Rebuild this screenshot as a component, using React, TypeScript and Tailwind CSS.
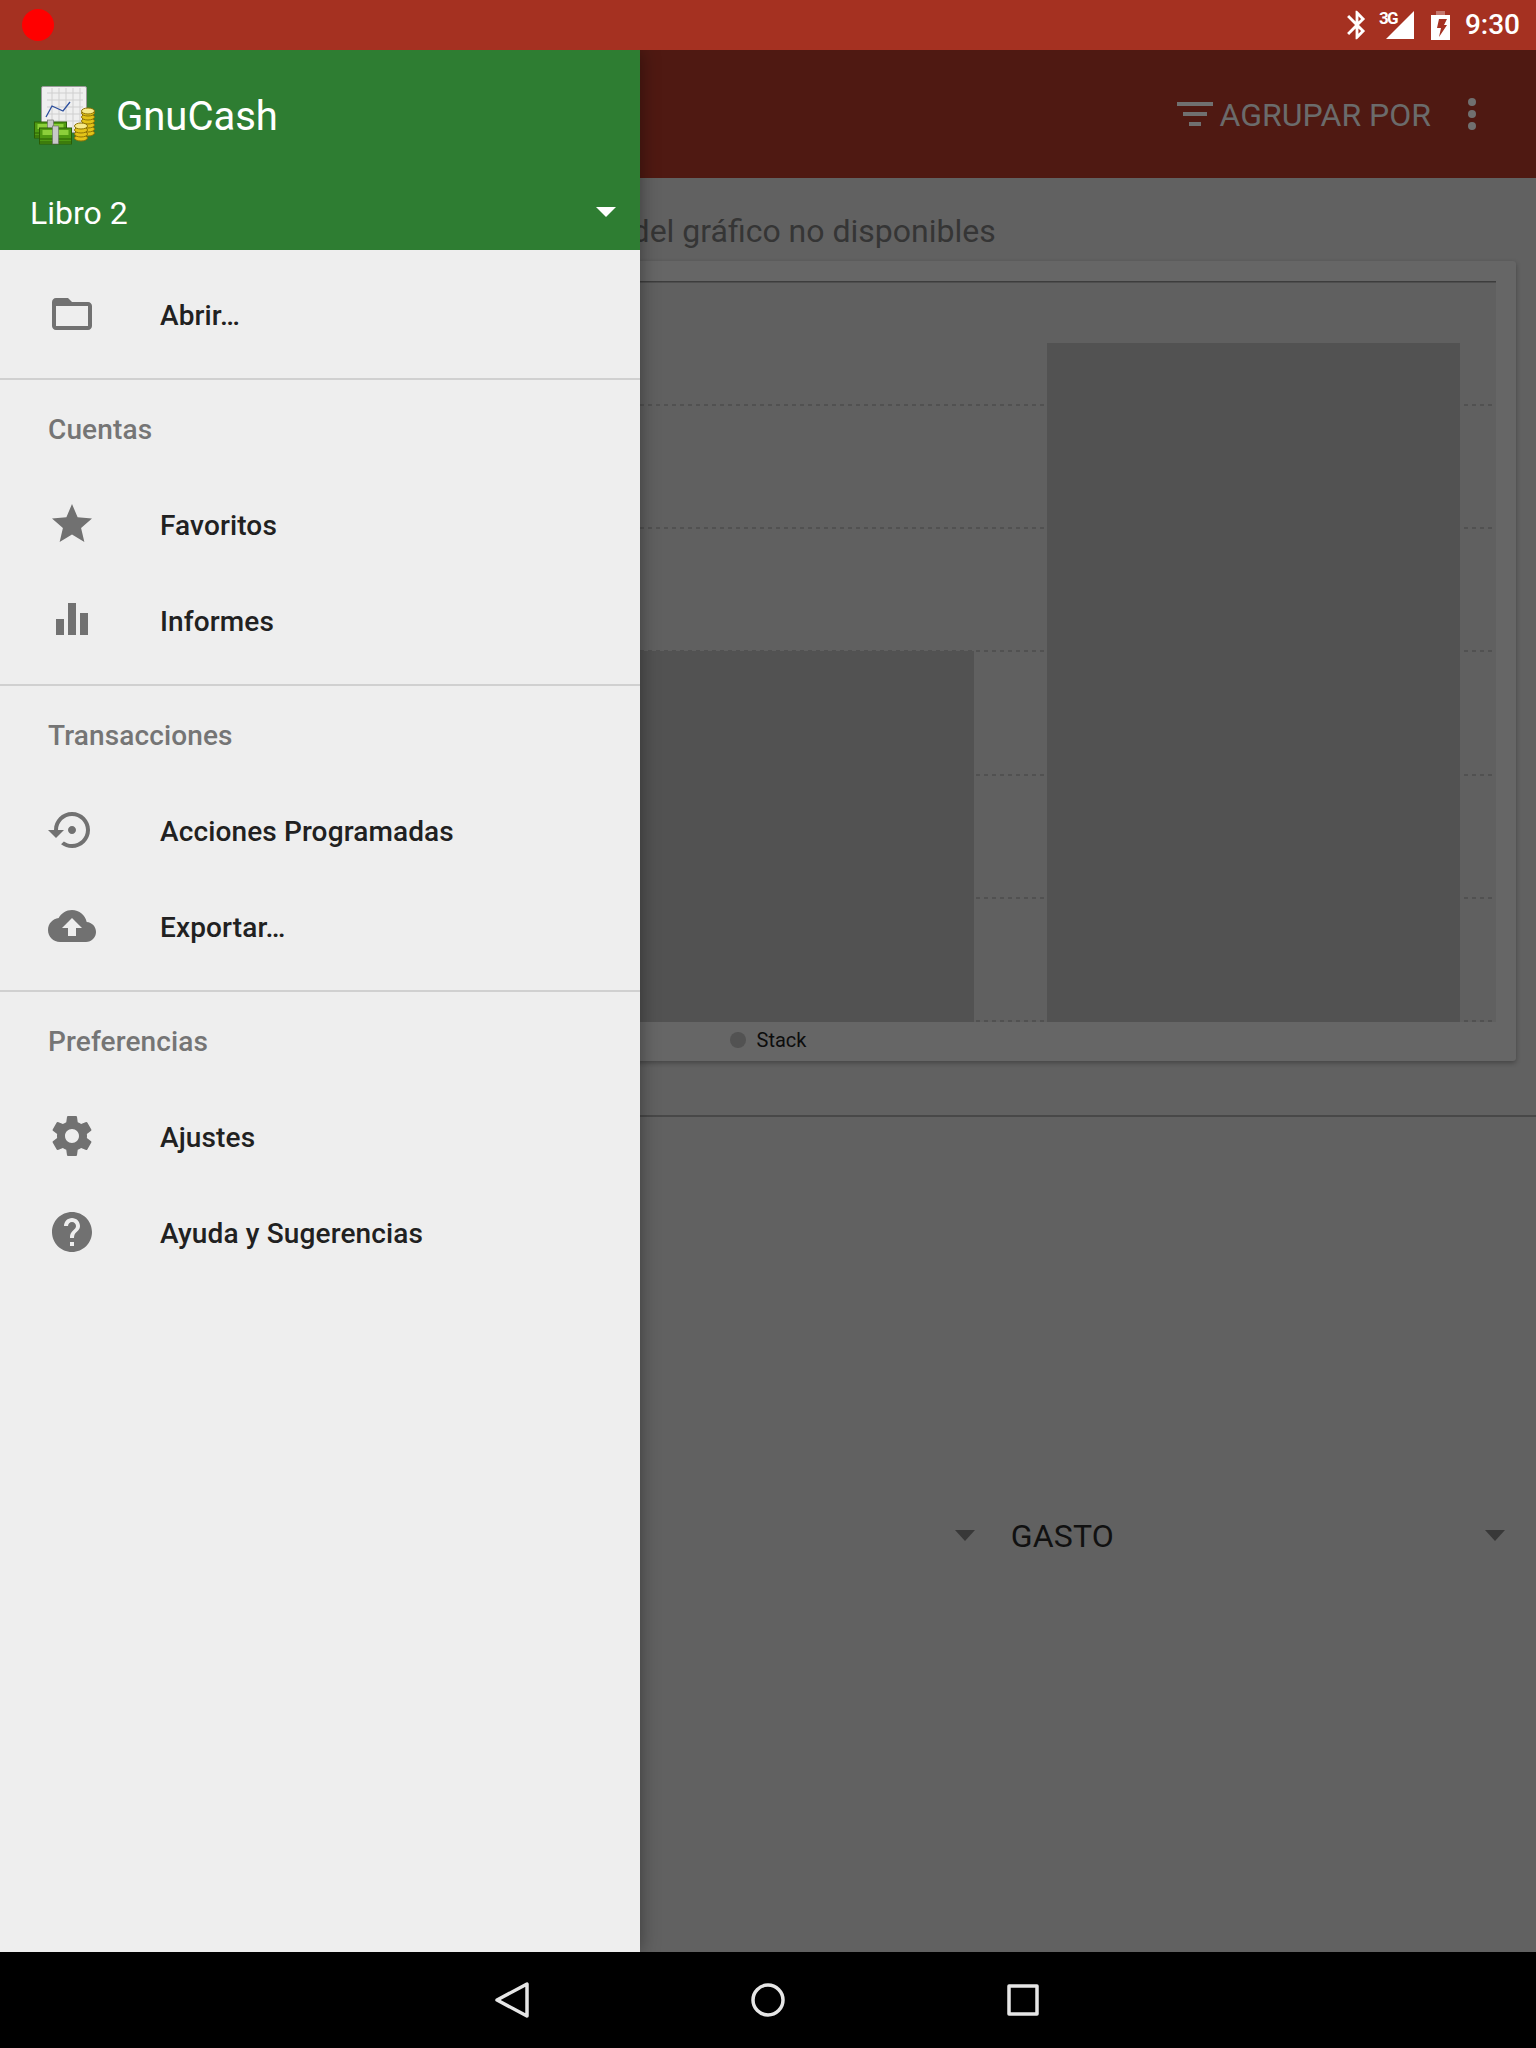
import React from 'react';

const PATHS = {
  folder: 'M20 6h-8l-2-2H4c-1.1 0-1.99.9-1.99 2L2 18c0 1.1.9 2 2 2h16c1.1 0 2-.9 2-2V8c0-1.1-.9-2-2-2zm0 12H4V8h16v10z',
  star: 'M12 17.27L18.18 21l-1.64-7.03L22 9.24l-7.19-.61L12 2 9.19 8.63 2 9.24l5.46 4.73L5.82 21z',
  bars: 'M4 11.5h4V19.5H4zM10 3.5h4V19.5h-4zM16 8.5h4V19.5h-4z',
  restore: 'M14 12c0-1.1-.9-2-2-2s-2 .9-2 2 .9 2 2 2 2-.9 2-2zm-2-9c-4.97 0-9 4.03-9 9H0l4 4 4-4H5c0-3.87 3.13-7 7-7s7 3.13 7 7-3.13 7-7 7c-1.51 0-2.91-.49-4.06-1.3l-1.42 1.44C8.04 20.3 9.94 21 12 21c4.97 0 9-4.03 9-9s-4.03-9-9-9z',
  upload: 'M19.35 10.04C18.67 6.59 15.64 4 12 4 9.11 4 6.6 5.64 5.35 8.04 2.34 8.36 0 10.91 0 14c0 3.31 2.69 6 6 6h13c2.76 0 5-2.24 5-5 0-2.64-2.05-4.78-4.65-4.96zM14 13v4h-4v-4H7l5-5 5 5h-3z',
  settings: 'M19.43 12.98c.04-.32.07-.64.07-.98s-.03-.66-.07-.98l2.11-1.65c.19-.15.24-.42.12-.64l-2-3.46c-.12-.22-.39-.3-.61-.22l-2.49 1c-.52-.4-1.08-.73-1.69-.98l-.38-2.65C14.46 2.18 14.25 2 14 2h-4c-.25 0-.46.18-.49.42l-.38 2.65c-.61.25-1.17.59-1.69.98l-2.49-1c-.23-.09-.49 0-.61.22l-2 3.46c-.13.22-.07.49.12.64l2.11 1.65c-.04.32-.07.65-.07.98s.03.66.07.98l-2.11 1.65c-.19.15-.24.42-.12.64l2 3.46c.12.22.39.3.61.22l2.49-1c.52.4 1.08.73 1.69.98l.38 2.65c.03.24.24.42.49.42h4c.25 0 .46-.18.49-.42l.38-2.65c.61-.25 1.17-.59 1.69-.98l2.49 1c.23.09.49 0 .61-.22l2-3.46c.12-.22.07-.49-.12-.64l-2.11-1.65zM12 15.5c-1.93 0-3.5-1.57-3.5-3.5s1.57-3.5 3.5-3.5 3.5 1.57 3.5 3.5-1.57 3.5-3.5 3.5z',
  help: 'M12 2C6.48 2 2 6.48 2 12s4.48 10 10 10 10-4.48 10-10S17.52 2 12 2zm1 17h-2v-2h2v2zm2.07-7.75l-.9.92C13.45 12.9 13 13.5 13 15h-2v-.5c0-1.1.45-2.1 1.17-2.83l1.24-1.26c.37-.36.59-.86.59-1.41 0-1.1-.9-2-2-2s-2 .9-2 2H8c0-2.21 1.79-4 4-4s4 1.79 4 4c0 .88-.36 1.68-.93 2.25z',
};

const SECTIONS = [
  { title: 'Cuentas', items: [{ label: 'Favoritos', icon: PATHS.star }, { label: 'Informes', icon: PATHS.bars }] },
  { title: 'Transacciones', items: [{ label: 'Acciones Programadas', icon: PATHS.restore }, { label: 'Exportar…', icon: PATHS.upload }] },
  { title: 'Preferencias', items: [{ label: 'Ajustes', icon: PATHS.settings }, { label: 'Ayuda y Sugerencias', icon: PATHS.help }] },
];

const GRID_LINES = [405, 528, 651, 775, 898, 1021];

function NavItem({ label, icon }: { label: string; icon: string }) {
  return (
    <div className="flex h-24 items-center pl-12">
      <svg viewBox="0 0 24 24" className="h-12 w-12 shrink-0 fill-[#717171]">
        <path d={icon} />
      </svg>
      <span className="ml-16 pt-1 text-[28px] font-medium tracking-[0.13px] text-[#212121]">{label}</span>
    </div>
  );
}

function Caret({ className }: { className: string }) {
  return <div className={`h-0 w-0 border-x-[10px] border-x-transparent ${className}`} />;
}

// Little GnuCash picture: chart sheet, coin stacks and banknotes
function Logo() {
  const coins = (x: number, top: number, bottom: number) => {
    const rows = [];
    for (let y = bottom - 5; y > top + 3; y -= 4) {
      rows.push(<ellipse key={y} cx={x} cy={y} rx="6.5" ry="3" fill="#e3c318" stroke="#8f7406" strokeWidth="1" />);
    }
    rows.push(<ellipse key="top" cx={x} cy={top + 3} rx="6.5" ry="3" fill="#f6ea8a" stroke="#8f7406" strokeWidth="1" />);
    return rows;
  };
  const notes = (x: number, y: number) => (
    <g>
      <rect x={x} y={y} width="32" height="16" fill="#4f9a12" stroke="#2b5e05" strokeWidth="1" />
      <rect x={x + 3} y={y + 2} width="26" height="5" fill="#8ccf3a" />
      <path d={`M${x} ${y + 11}h32M${x} ${y + 14}h32`} stroke="#2b5e05" strokeWidth="1" />
      <rect x={x + 13} y={y - 2} width="6" height="18" fill="#c9c9c9" stroke="#666" strokeWidth="0.6" />
    </g>
  );
  return (
    <svg viewBox="33 84 63 60" className="h-[60px] w-[63px] shrink-0">
      <rect x="41.5" y="85.5" width="45" height="46" rx="1.5" fill="#efefef" stroke="#9a9a9a" />
      <path d="M47 92h36M47 99h36M47 106h36M47 113h36M47 120h36M52 87v44M59 87v44M66 87v44M73 87v44M80 87v44" stroke="#cfcfcf" strokeWidth="1" />
      <path d="M46 116l6-11 11 5 7-9" fill="none" stroke="#2c4f9e" strokeWidth="1.3" />
      {coins(88, 107, 137)}
      {coins(81, 122, 142)}
      {notes(34.5, 121)}
      {notes(39.5, 127)}
    </svg>
  );
}

function Drawer() {
  return (
    <aside className="absolute inset-y-0 left-0 flex w-[640px] flex-col bg-[#eeeeee] shadow-[0_0_18px_rgba(0,0,0,0.4)]">
      <header className="flex h-[200px] flex-col bg-[#2e7d32] pt-8 text-white">
        <div className="flex items-center gap-5 pl-[33px]">
          <Logo />
          <span className="pt-1 text-[40px] leading-[62px]">GnuCash</span>
        </div>
        <div className="mt-auto flex h-[76px] items-center justify-between pl-[30px] pr-6">
          <span className="pt-[2px] text-[32px]">Libro 2</span>
          <Caret className="border-t-[10px] border-t-white" />
        </div>
      </header>
      <div className="py-4">
        <NavItem label="Abrir…" icon={PATHS.folder} />
      </div>
      {SECTIONS.map((section) => (
        <section key={section.title} className="border-t-2 border-[#d0d0d0] pb-4">
          <div className="flex h-24 items-center pl-12 pt-1 text-[28px] font-medium tracking-[0.13px] text-[#757575]">{section.title}</div>
          {section.items.map((item) => (
            <NavItem key={item.label} label={item.label} icon={item.icon} />
          ))}
        </section>
      ))}
    </aside>
  );
}

function ChartCard() {
  return (
    <div className="mx-5 h-[800px] rounded-[3px] bg-[#666666] px-5 pt-5 shadow-[0_2px_5px_rgba(0,0,0,0.3)]">
      <svg viewBox="40 281 1456 741" className="block h-[741px] w-[1456px] bg-[#606060]">
        {GRID_LINES.map((y) => (
          <line key={y} x1="40" x2="1496" y1={y} y2={y} stroke="#4c4c4c" strokeWidth="1.5" strokeDasharray="4 4" />
        ))}
        <path d="M40 281.75h1456" stroke="#3d3d3d" strokeWidth="1.5" />
        <rect x="561" y="651" width="413" height="371" fill="#525252" />
        <rect x="1047" y="343" width="413" height="679" fill="#525252" />
      </svg>
      <div className="flex h-[35px] items-center justify-center gap-[11px]">
        <span className="h-4 w-4 rounded-full bg-[#525252]" />
        <span className="text-[20px] text-[#0d0d0d]">Stack</span>
      </div>
    </div>
  );
}

function Content() {
  return (
    <main className="h-full bg-[#616161]">
      <div className="flex h-[128px] items-center justify-end bg-[#4f1912] pr-[60px] text-[#6b6b6b]">
        <svg viewBox="0 0 36 24" className="h-6 w-9 fill-[#707070]">
          <path d="M0 0h36v4H0zM6 10h24v4H6zM12 20h12v4H12z" />
        </svg>
        <span className="ml-[7px] pt-px text-[32px]">AGRUPAR POR</span>
        <div className="ml-[37px] flex flex-col gap-1">
          <span className="h-2 w-2 rounded-full bg-[#707070]" />
          <span className="h-2 w-2 rounded-full bg-[#707070]" />
          <span className="h-2 w-2 rounded-full bg-[#707070]" />
        </div>
      </div>
      <div className="h-[83px] pt-[34px] text-center text-[32px] leading-[38px] text-[#353535]">
        Datos del gráfico no disponibles
      </div>
      <ChartCard />
      <div className="mt-[54px] h-[2px] bg-[#484848]" />
      <div className="mt-[398px] flex h-10 items-center justify-end">
        <Caret className="border-t-[11px] border-t-[#383838]" />
        <span className="ml-9 pt-[2px] text-[32px] tracking-[0.2px] text-[#111111]">GASTO</span>
        <Caret className="ml-[371px] mr-[31px] border-t-[11px] border-t-[#383838]" />
      </div>
    </main>
  );
}

function StatusBar() {
  return (
    <div className="flex h-[50px] shrink-0 items-center bg-[#a53121] pl-[22px] pr-4 text-white">
      <span className="h-8 w-8 rounded-full bg-[#ff0000]" />
      <svg viewBox="0 0 24 24" className="ml-auto h-[34px] w-[34px] fill-white">
        <path d="M17.71 7.71L12 2h-1v7.59L6.41 5 5 6.41 10.59 12 5 17.59 6.41 19 11 14.41V22h1l5.71-5.71-4.3-4.29 4.3-4.29zM13 5.83l1.88 1.88L13 9.59V5.83zm1.88 10.46L13 18.17v-3.76l1.88 1.88z" />
      </svg>
      <div className="relative ml-3 h-7 w-7">
        <svg viewBox="0 0 28 28" className="h-7 w-7 fill-white">
          <path d="M28 0v28H0z" />
        </svg>
        <span className="absolute -left-[7px] -top-[2px] text-[17px] font-bold leading-[18px] tracking-[-1.6px]">3G</span>
      </div>
      <svg viewBox="0 0 19 29" className="ml-[17px] h-[29px] w-[19px]">
        <path d="M5 0h9v4H5z" fill="#ffffff" fillOpacity="0.35" />
        <path fillRule="evenodd" d="M0 4h19v25H0zM8 8h8l-3 6h3L8 26l2-9H6z" fill="#ffffff" />
      </svg>
      <span className="ml-[15px] text-[28px] font-medium">9:30</span>
    </div>
  );
}

function NavBar() {
  return (
    <div className="flex h-24 shrink-0 items-center justify-center gap-[222px] bg-black pr-[2px]">
      <svg viewBox="0 0 34 36" className="h-9 w-[34px] fill-none stroke-[#e6e6e6]" strokeWidth="3.5" strokeLinejoin="round">
        <path d="M32 2v32L2 18z" />
      </svg>
      <svg viewBox="0 0 34 34" className="h-[34px] w-[34px] fill-none stroke-[#e6e6e6]" strokeWidth="3.5">
        <circle cx="17" cy="17" r="15" />
      </svg>
      <svg viewBox="0 0 32 32" className="h-8 w-8 fill-none stroke-[#e6e6e6]" strokeWidth="3.5" strokeLinejoin="round">
        <rect x="2" y="2" width="28" height="28" />
      </svg>
    </div>
  );
}

export default function App() {
  return (
    <div className="flex h-[2048px] w-[1536px] flex-col overflow-hidden font-[Roboto,sans-serif]">
      <StatusBar />
      <div className="relative min-h-0 flex-1 overflow-hidden">
        <Content />
        <Drawer />
      </div>
      <NavBar />
    </div>
  );
}
